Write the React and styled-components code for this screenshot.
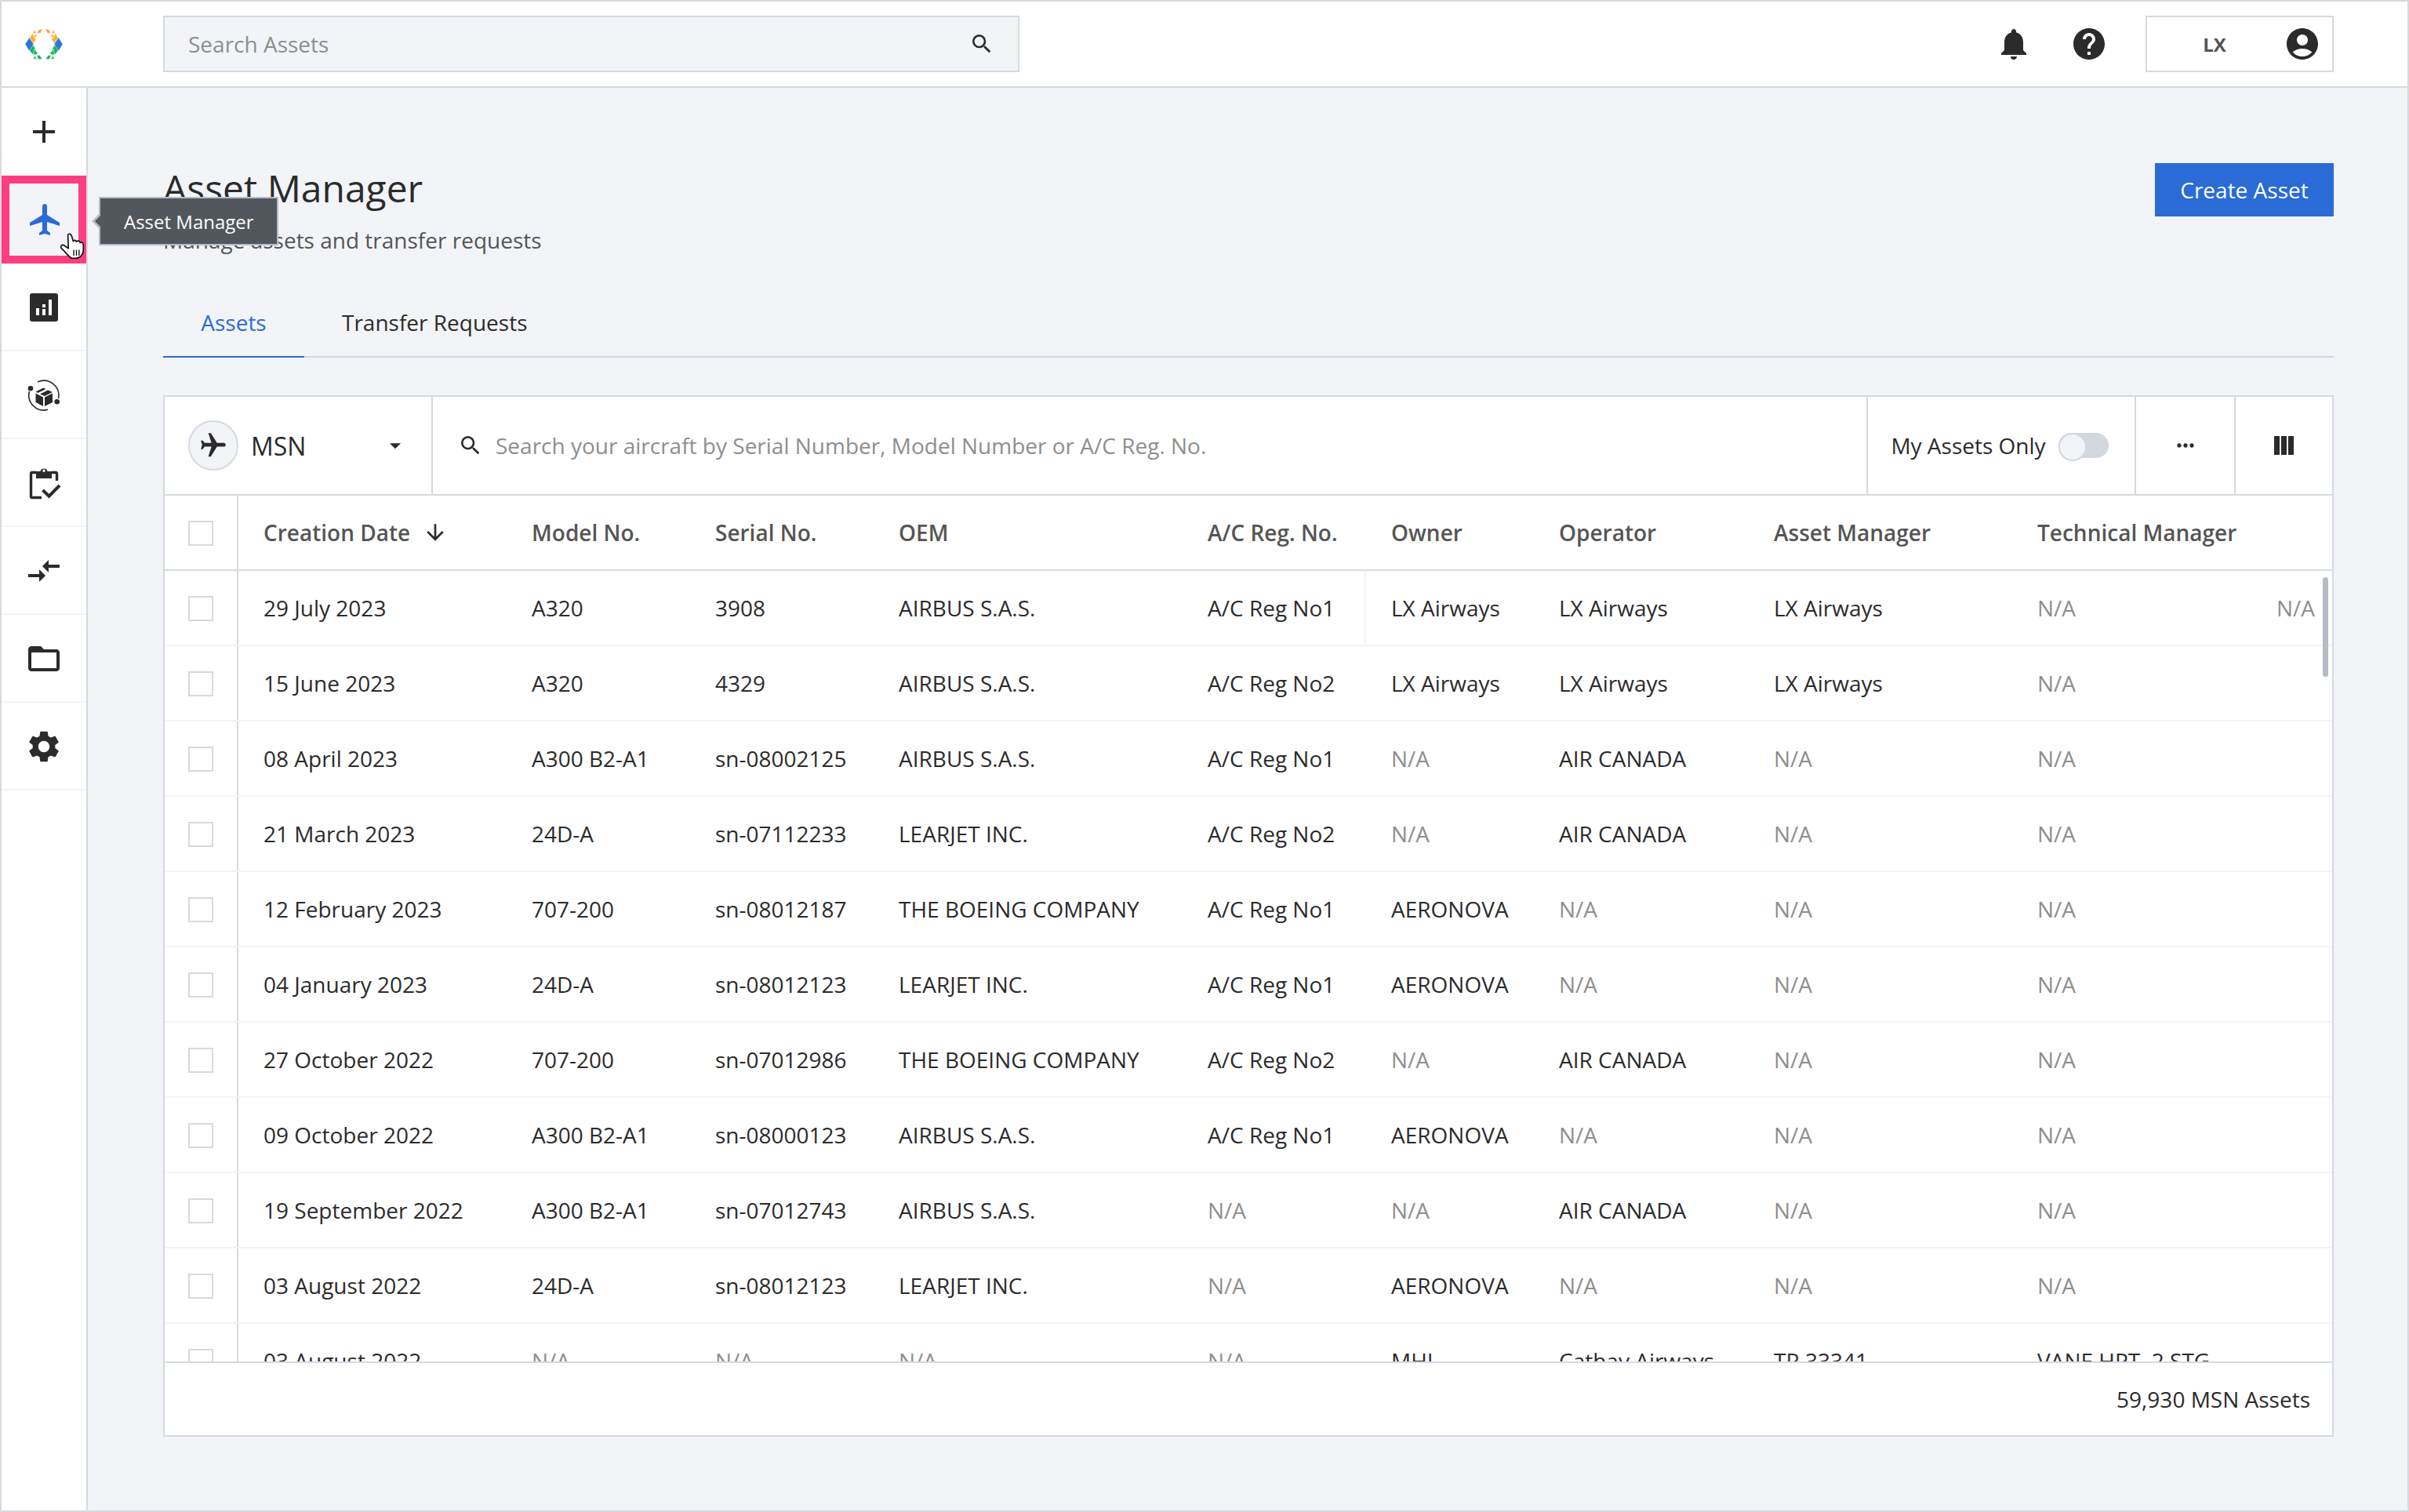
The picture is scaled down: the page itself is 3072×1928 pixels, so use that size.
import React from "react";
import styled, { createGlobalStyle } from "styled-components";
import {
  MdAdd, MdFlight, MdCompareArrows, MdSettings, MdNotifications, MdHelp,
  MdAccountCircle, MdSearch, MdArrowDropDown, MdMoreHoriz, MdArrowDownward, MdFolderOpen,
} from "react-icons/md";

const Global = createGlobalStyle`
  html, body { margin: 0; padding: 0; background: #f2f4f8; }
  body { font-family: "Open Sans", "Noto Sans", sans-serif; font-size: 28px; color: #2b2b2b; }
  * { box-sizing: border-box; }
`;

const Page = styled.div`
  width: 3072px; height: 1928px; border: 2px solid #d5dae1;
  display: flex; flex-direction: column; overflow: hidden; background: #f2f4f8;
`;
const TopBar = styled.header`
  flex: none; height: 110px; background: #fff; border-bottom: 2px solid #d5dae1;
  display: flex; align-items: center; padding-right: 94px;
`;
const LogoBox = styled.div`
  width: 206px; flex: none; padding-left: 30px; display: flex; align-items: center;
`;
const GlobalSearch = styled.div`
  width: 1092px; height: 72px; background: #f2f4f8; border: 2px solid #d5dae1;
  display: flex; align-items: center; justify-content: space-between; padding: 0 30px;
  color: #8e8e8e; svg { color: #2b2b2b; }
`;
const TopActions = styled.div`
  margin-left: auto; display: flex; align-items: center; gap: 48px; color: #2b2b2b;
`;
const UserBox = styled.div`
  width: 240px; height: 72px; background: #fff; border: 2px solid #d5dae1;
  display: flex; align-items: center; padding-right: 14px;
`;
const UserName = styled.span`
  flex: 1; text-align: center; font-size: 24px; font-weight: 700; color: #555; padding-right: 2px;
`;
const Body = styled.div`
  flex: 1; display: flex; min-height: 0;
`;
const SideBar = styled.nav`
  width: 110px; flex: none; background: #fff; border-right: 2px solid #d5dae1;
  position: relative; z-index: 2;
`;
const SideItem = styled.div`
  height: 112px; padding-top: 2px; border-bottom: 2px solid #f2f4f8; position: relative;
  display: flex; align-items: center; justify-content: center;
  background: ${(p) => (p.$active ? "#f2f4f8" : "#fff")};
  color: ${(p) => (p.$active ? "#2a6bd6" : "#2b2b2b")};
`;
const Highlight = styled.div`
  position: absolute; left: 0; right: 0; top: 0; bottom: -2px;
  border: 10px solid #ff3d81; pointer-events: none;
`;
const Tooltip = styled.div`
  position: absolute; left: 124px; top: 27px; width: 229px; height: 62px;
  background: #52565d; border: 2px solid #b5bcc5; color: #fff; font-size: 24px;
  display: flex; align-items: center; padding-left: 30px; white-space: nowrap;
  &::before {
    content: ""; position: absolute; left: -11px; top: 19px;
    border-style: solid; border-width: 10px 10px 10px 0;
    border-color: transparent #b5bcc5 transparent transparent;
  }
  &::after {
    content: ""; position: absolute; left: -7px; top: 22px;
    border-style: solid; border-width: 7px 7px 7px 0;
    border-color: transparent #52565d transparent transparent;
  }
`;
const Cursor = styled.svg`
  position: absolute; left: 74px; top: 73px;
`;
const Main = styled.main`
  flex: 1; min-width: 0; padding: 96px 94px 0 96px; display: flex; flex-direction: column;
`;
const Heading = styled.div`
  display: flex; justify-content: space-between; align-items: flex-start; height: 160px;
`;
const Title = styled.h1`
  margin: 0; font-size: 48px; line-height: 64px; font-weight: 400; color: #2b2b2b;
`;
const Subtitle = styled.p`
  margin: 14px 0 0; font-size: 28px; line-height: 40px; color: #555;
`;
const PrimaryButton = styled.button`
  width: 228px; height: 68px; border: 0; background: #2a6bd6; color: #fff;
  font: inherit; font-size: 28px; padding: 0;
`;
const Tabs = styled.div`
  height: 88px; display: flex; border-bottom: 2px solid #d5dae1; gap: 48px;
`;
const Tab = styled.div`
  height: 88px; width: ${(p) => (p.$active ? "180px" : "auto")}; display: flex; align-items: center;
  justify-content: center; color: ${(p) => (p.$active ? "#2a6bd6" : "#2b2b2b")};
  border-bottom: 2px solid ${(p) => (p.$active ? "#2a6bd6" : "transparent")};
`;
const Card = styled.section`
  margin-top: 48px; height: 1328px; background: #fff; border: 2px solid #d5dae1;
  display: flex; flex-direction: column;
`;
const Toolbar = styled.div`
  flex: none; height: 126px; border-bottom: 2px solid #d5dae1; display: flex;
`;
const MsnCell = styled.div`
  width: 340px; flex: none; padding: 0 29px 0 30px; display: flex; align-items: center; gap: 16px;
`;
const PlaneBadge = styled.div`
  width: 64px; height: 64px; border-radius: 50%; background: #f2f4f8; border: 2px solid #d5dae1;
  display: flex; align-items: center; justify-content: center;
  svg { transform: rotate(90deg); }
`;
const MsnLabel = styled.span`
  font-size: 32px; color: #2b2b2b; flex: 1;
`;
const AssetSearch = styled.div`
  flex: 1; border-left: 2px solid #d5dae1; padding-left: 32px; display: flex; align-items: center;
  gap: 16px; color: #8e8e8e; svg { color: #2b2b2b; }
`;
const ToolCell = styled.div`
  flex: none; width: ${(p) => p.$w}px; border-left: 2px solid #d5dae1; display: flex;
  align-items: center; justify-content: center; gap: 16px;
`;
const SwitchCell = styled(ToolCell)`
  padding-right: 4px;
`;
const Switch = styled.div`
  width: 64px; height: 32px; border-radius: 16px; background: #d3d8e0; position: relative;
  &::after {
    content: ""; position: absolute; left: 0; top: 0; width: 32px; height: 32px;
    border-radius: 50%; background: #f2f4f8; border: 2px solid #d3d8e0;
  }
`;
const COLS = "94px 342px 234px 234px 394px 234px 214px 274px 336px 1fr";
const HeadRow = styled.div`
  flex: none; height: 96px; display: grid; grid-template-columns: ${COLS};
  border-bottom: 2px solid #d5dae1; font-weight: 600; color: #555;
`;
const Rows = styled.div`
  flex: 1; min-height: 0; overflow: hidden; position: relative;
`;
const Row = styled.div`
  height: 96px; display: grid; grid-template-columns: ${COLS}; border-bottom: 2px solid #f2f4f8;
`;
const CheckCell = styled.div`
  border-right: 2px solid #d5dae1; padding-top: 2px; display: flex; align-items: center; justify-content: center;
`;
const Checkbox = styled.div`
  width: 32px; height: 32px; background: #fff; border: 2px solid #d5dae1;
`;
const Cell = styled.div`
  padding: 0 22px 0 32px; display: flex; align-items: center; justify-content: space-between;
  white-space: nowrap; color: ${(p) => (p.$muted ? "#8e8e8e" : "#2b2b2b")};
  ${(p) => (p.$divided ? "border-right: 2px solid #f2f4f8;" : "")}
`;
const HeadCell = styled.div`
  padding-left: 32px; display: flex; align-items: center; white-space: nowrap; gap: 16px;
  svg { color: #2b2b2b; }
`;
const Thumb = styled.div`
  position: absolute; right: 5px; top: 8px; width: 7px; height: 127px; border-radius: 4px; background: #b5bcc5;
`;
const Footer = styled.div`
  flex: none; height: 94px; border-top: 2px solid #d5dae1; display: flex; align-items: center;
  justify-content: flex-end; padding-right: 28px; color: #2b2b2b;
`;
const ShiftedIcon = styled.span`
  display: flex; margin-left: 2px;
`;

const LEFT_LOGO = [
  ["#fb9b33", "125,125 132,113 139,125"],
  ["#fb9b33", "141,125 150,111 163,111 154,125"],
  ["#fdb22f", "128,140 135,127 143,140"],
  ["#fdb22f", "113,143 124,126 138,150 128,165"],
  ["#2b78d8", "96,167 112,142 128,166 122,191 110,191"],
  ["#19b563", "113,192 127,170 136,186 126,208"],
  ["#19b563", "132,186 146,205 127,209"],
  ["#19b563", "127,224 134,211 141,224"],
  ["#19b563", "141,210 152,210 162,225 146,225"],
];
const Logo = () => (
  <svg width="48" height="39" viewBox="96 110 144 116">
    {LEFT_LOGO.map(([c, p]) => <polygon key={p} fill={c} points={p} stroke="#fff" strokeWidth="1.5" />)}
    <g transform="translate(336 0) scale(-1 1)">
      {LEFT_LOGO.map(([c, p]) => <polygon key={p} fill={c} points={p} stroke="#fff" strokeWidth="1.5" />)}
    </g>
  </svg>
);
const HandCursor = () => (
  <Cursor width="32" height="34" viewBox="-3 -3 94 100">
    <path d="M28 5C30-2 40 0 42 8L48 28C52 22 58 24 60 30C64 24 72 26 74 34C78 30 86 32 86 42L86 60C86 75 78 90 60 92L42 92C30 85 20 70 4 55C-2 48 6 38 14 44L30 55Z"
      fill="#fff" stroke="#111" strokeWidth="5" strokeLinejoin="round" />
    <path d="M50 60V82M60 60V82M70 60V82" stroke="#111" strokeWidth="4" fill="none" />
  </Cursor>
);
const PlaneIcon = ({ size }) => (
  <svg width={size} height={size} viewBox="-.5 0 24 24" fill="currentColor">
    <path d="M21 16v-2l-8-5V3.5c0-.83-.67-1.5-1.5-1.5S10 2.67 10 3.5V9l-8 5v2l8-2.5V19l-2 1.5V22l3.5-1 3.5 1v-1.5L13 19v-5.5l8 2.5z" />
  </svg>
);
const ChartIcon = () => (
  <svg width="48" height="48" viewBox="0 0 48 48" fill="currentColor">
    <path fillRule="evenodd" d="M9 6h30a3 3 0 0 1 3 3v30a3 3 0 0 1-3 3H9a3 3 0 0 1-3-3V9a3 3 0 0 1 3-3zM14 25v9h4v-9zM22 20v4h4v-4zM22 26v8h4v-8zM30 14v20h4V14z" />
  </svg>
);
const BoxOrbitIcon = () => (
  <svg width="48" height="48" viewBox="0 0 48 48" fill="currentColor">
    <path d="M5.5 19A19 19 0 0 0 29 42.3M16 7A19 19 0 0 1 42.5 28" fill="none" stroke="currentColor" strokeWidth="1.6" />
    <circle cx="7" cy="15.3" r="3.3" />
    <circle cx="40.7" cy="32.3" r="3.3" />
    <path d="M13.5 21.5l9.5 5v11.5l-9.5-5zM25 26.5l10-5v11.5l-10 5z" />
    <path d="M13.5 19.5l10-5 3 1.5-10 5zM19 22.5l10-5 6 2.5-10 5z" />
  </svg>
);
const ClipboardIcon = () => (
  <svg width="48" height="48" viewBox="0 0 48 48" fill="currentColor">
    <path d="M14 10.5H9a1.5 1.5 0 0 0-1.5 1.5v29A1.5 1.5 0 0 0 9 42.5h12M34 10.5h5a1.5 1.5 0 0 1 1.5 1.5v9" fill="none" stroke="currentColor" strokeWidth="3.4" />
    <path fillRule="evenodd" d="M14 9h5.4a4.8 4.8 0 0 1 9.2 0H34v9H14zM24 6.6a1.7 1.7 0 1 0 0 3.4 1.7 1.7 0 0 0 0-3.4z" />
    <path d="M22.5 33l8 7.7L44 27" fill="none" stroke="currentColor" strokeWidth="4" />
  </svg>
);
const ColumnsIcon = () => (
  <svg width="26" height="24" viewBox="0 0 26 24" fill="#2b2b2b">
    <rect x="0" y="0" width="7" height="24" /><rect x="9" y="0" width="7" height="24" /><rect x="18" y="0" width="7" height="24" />
  </svg>
);

const NA = "N/A";
const ROWS = [
  ["29 July 2023", "A320", "3908", "AIRBUS S.A.S.", "A/C Reg No1", "LX Airways", "LX Airways", "LX Airways", NA],
  ["15 June 2023", "A320", "4329", "AIRBUS S.A.S.", "A/C Reg No2", "LX Airways", "LX Airways", "LX Airways", NA],
  ["08 April 2023", "A300 B2-A1", "sn-08002125", "AIRBUS S.A.S.", "A/C Reg No1", NA, "AIR CANADA", NA, NA],
  ["21 March 2023", "24D-A", "sn-07112233", "LEARJET INC.", "A/C Reg No2", NA, "AIR CANADA", NA, NA],
  ["12 February 2023", "707-200", "sn-08012187", "THE BOEING COMPANY", "A/C Reg No1", "AERONOVA", NA, NA, NA],
  ["04 January 2023", "24D-A", "sn-08012123", "LEARJET INC.", "A/C Reg No1", "AERONOVA", NA, NA, NA],
  ["27 October 2022", "707-200", "sn-07012986", "THE BOEING COMPANY", "A/C Reg No2", NA, "AIR CANADA", NA, NA],
  ["09 October 2022", "A300 B2-A1", "sn-08000123", "AIRBUS S.A.S.", "A/C Reg No1", "AERONOVA", NA, NA, NA],
  ["19 September 2022", "A300 B2-A1", "sn-07012743", "AIRBUS S.A.S.", NA, NA, "AIR CANADA", NA, NA],
  ["03 August 2022", "24D-A", "sn-08012123", "LEARJET INC.", NA, "AERONOVA", NA, NA, NA],
  ["03 August 2022", NA, NA, NA, NA, "MHI", "Cathay Airways", "TR 33341", "VANE HPT, 2 STG"],
];
const HEADERS = ["Model No.", "Serial No.", "OEM", "A/C Reg. No.", "Owner", "Operator", "Asset Manager", "Technical Manager"];

export default function App() {
  return (
    <>
      <Global />
      <Page>
        <TopBar>
          <LogoBox><Logo /></LogoBox>
          <GlobalSearch>Search Assets<MdSearch size={32} /></GlobalSearch>
          <TopActions>
            <MdNotifications size={48} />
            <MdHelp size={48} />
            <UserBox><UserName>LX</UserName><MdAccountCircle size={48} /></UserBox>
          </TopActions>
        </TopBar>
        <Body>
          <SideBar>
            <SideItem><MdAdd size={48} /></SideItem>
            <SideItem $active>
              <ShiftedIcon><PlaneIcon size={48} /></ShiftedIcon>
              <Highlight />
              <HandCursor />
              <Tooltip>Asset Manager</Tooltip>
            </SideItem>
            <SideItem><ChartIcon /></SideItem>
            <SideItem><BoxOrbitIcon /></SideItem>
            <SideItem><ClipboardIcon /></SideItem>
            <SideItem><MdCompareArrows size={48} /></SideItem>
            <SideItem><MdFolderOpen size={48} /></SideItem>
            <SideItem><MdSettings size={48} /></SideItem>
          </SideBar>
          <Main>
            <Heading>
              <div>
                <Title>Asset Manager</Title>
                <Subtitle>Manage assets and transfer requests</Subtitle>
              </div>
              <PrimaryButton>Create Asset</PrimaryButton>
            </Heading>
            <Tabs>
              <Tab $active>Assets</Tab>
              <Tab>Transfer Requests</Tab>
            </Tabs>
            <Card>
              <Toolbar>
                <MsnCell>
                  <PlaneBadge><MdFlight size={38} /></PlaneBadge>
                  <MsnLabel>MSN</MsnLabel>
                  <MdArrowDropDown size={34} />
                </MsnCell>
                <AssetSearch>
                  <MdSearch size={32} />
                  Search your aircraft by Serial Number, Model Number or A/C Reg. No.
                </AssetSearch>
                <SwitchCell $w={342}>My Assets Only<Switch /></SwitchCell>
                <ToolCell $w={127}><MdMoreHoriz size={32} /></ToolCell>
                <ToolCell $w={125}><ColumnsIcon /></ToolCell>
              </Toolbar>
              <HeadRow>
                <CheckCell><Checkbox /></CheckCell>
                <HeadCell>Creation Date<MdArrowDownward size={32} /></HeadCell>
                {HEADERS.map((h) => <HeadCell key={h}>{h}</HeadCell>)}
              </HeadRow>
              <Rows>
                {ROWS.map((r, i) => (
                  <Row key={i}>
                    <CheckCell><Checkbox /></CheckCell>
                    {r.map((v, j) => (
                      <Cell key={j} $muted={v === NA} $divided={i === 0 && j === 4}>
                        {v}
                        {i === 0 && j === 8 ? <span>N/A</span> : null}
                      </Cell>
                    ))}
                  </Row>
                ))}
                <Thumb />
              </Rows>
              <Footer>59,930 MSN Assets</Footer>
            </Card>
          </Main>
        </Body>
      </Page>
    </>
  );
}
